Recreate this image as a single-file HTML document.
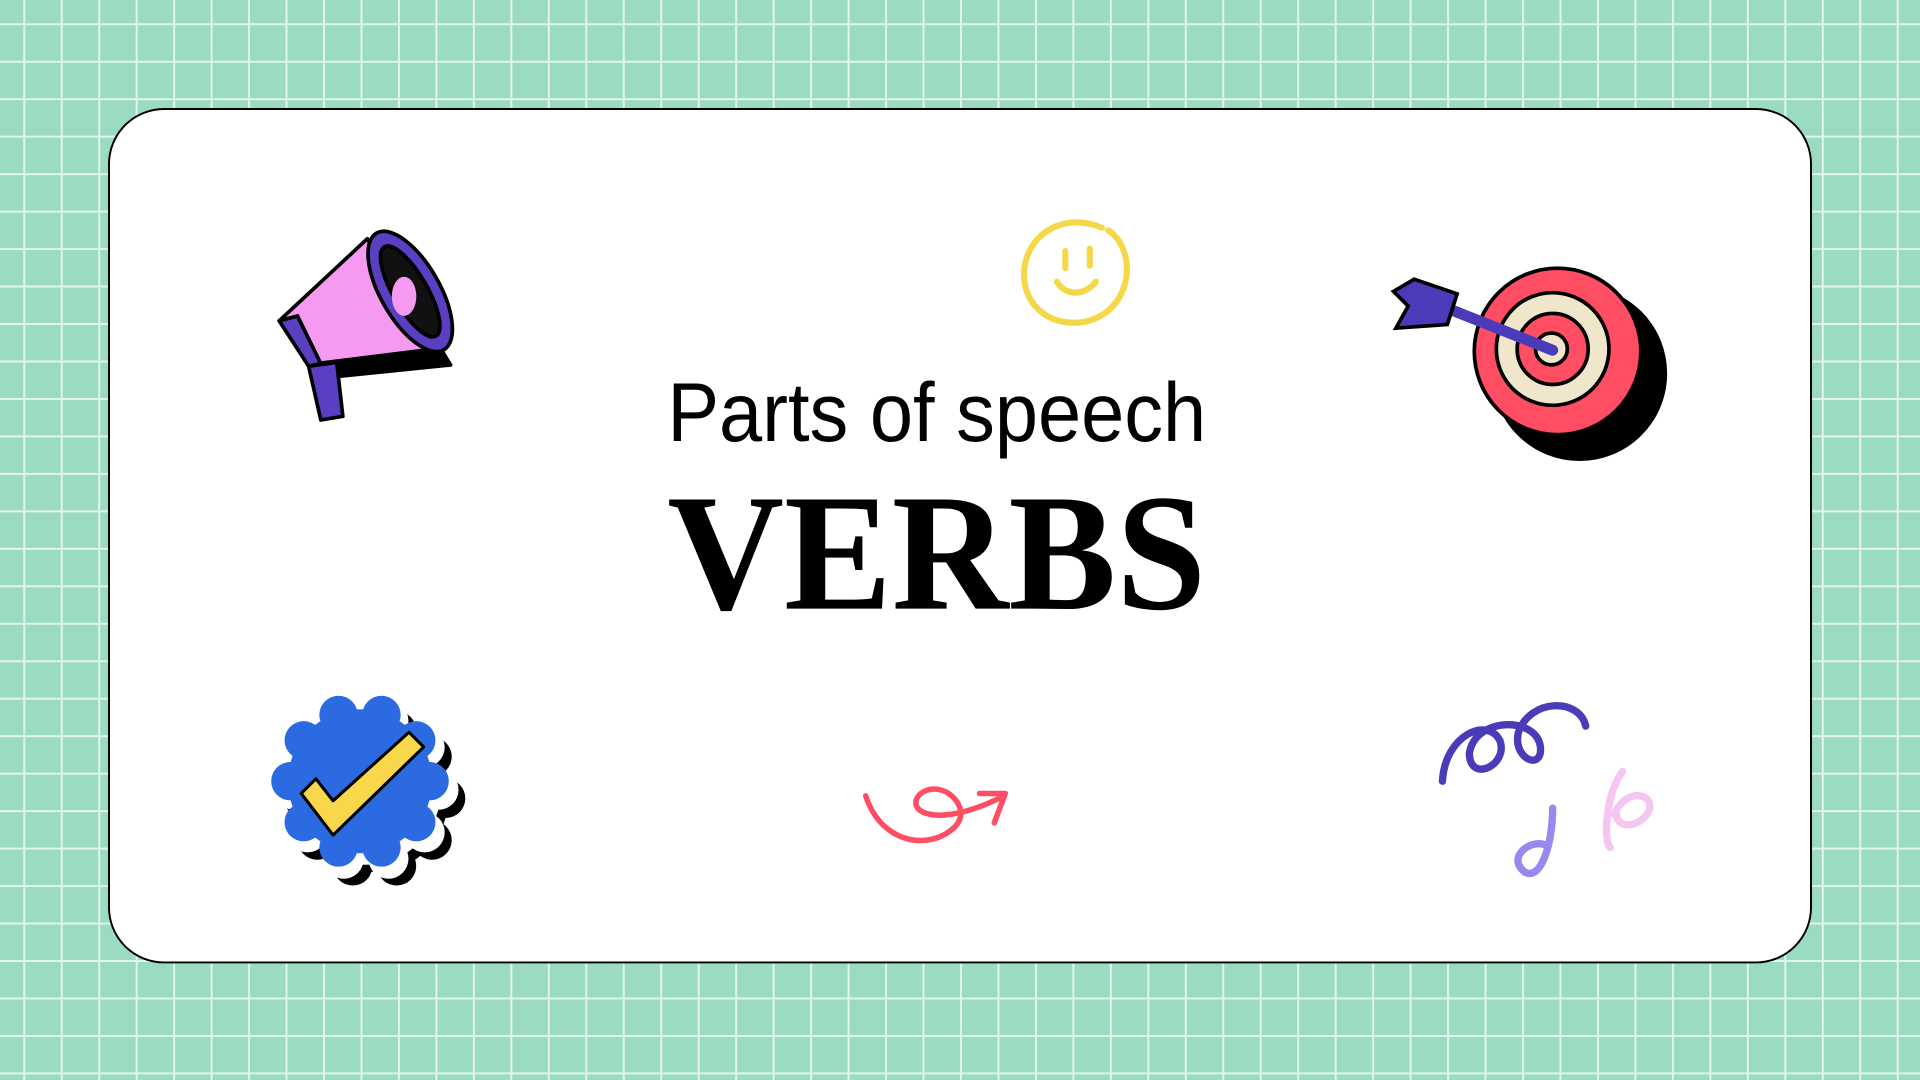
<!DOCTYPE html>
<html><head><meta charset="utf-8"><style>html,body{margin:0;padding:0;width:1920px;height:1080px;overflow:hidden;background:#9bdbc2}svg{display:block}</style></head><body>
<svg width="1920" height="1080" viewBox="0 0 1568 882" xmlns="http://www.w3.org/2000/svg">
<defs><pattern id="g" x="19" y="19" width="30.6" height="30.6" patternUnits="userSpaceOnUse"><rect width="30.6" height="30.6" fill="#9bdbc2"/><path d="M0 0H30.6M0 0V30.6" stroke="#e2f4ec" stroke-width="3.2"/></pattern>
<g id="b"><circle cx="0" cy="0" r="60"/>
<circle cx="58" cy="0" r="16"/><circle cx="46.9" cy="34.1" r="16"/><circle cx="17.9" cy="55.2" r="16"/><circle cx="-17.9" cy="55.2" r="16"/><circle cx="-46.9" cy="34.1" r="16"/><circle cx="-58" cy="0" r="16"/><circle cx="-46.9" cy="-34.1" r="16"/><circle cx="-17.9" cy="-55.2" r="16"/><circle cx="17.9" cy="-55.2" r="16"/><circle cx="46.9" cy="-34.1" r="16"/></g>
</defs>
<rect width="1568" height="882" fill="url(#g)"/>
<rect x="89" y="89" width="1390" height="697" rx="45" fill="#fff" stroke="#000" stroke-width="1.6"/>
<text x="545" y="360" font-family="Liberation Sans, sans-serif" font-size="68" textLength="440" lengthAdjust="spacingAndGlyphs" fill="#000">Parts of speech</text>
<text x="545" y="497" font-family="Liberation Serif, serif" font-weight="bold" font-size="136" textLength="440" lengthAdjust="spacingAndGlyphs" fill="#000">VERBS</text>
<!-- smiley -->
<g fill="none" stroke="#f5d84a" stroke-width="5" stroke-linecap="round"><path d="M905 188 C930 205 925 255 885 263 C850 268 830 240 838 212 C846 185 875 175 900 186"/><path d="M870 205v14M890 203v14M863 230c8 12 22 12 32 0"/></g>
<!-- megaphone -->
<g stroke="#000" stroke-width="3" stroke-linejoin="round">
<path d="M232 268 L305 200 L360 290 L262 300 Z" fill="#000" transform="translate(8,8)"/>
<path d="M228 262 L300 195 L355 285 L258 297 Z" fill="#f59af0"/>
<path d="M228 262 L243 258 L262 297 L252 299 Z" fill="#5a3fc2"/>
<path d="M252 299 L275 296 L280 340 L262 343 Z" fill="#5a3fc2"/>
<ellipse cx="335" cy="238" rx="24" ry="55" transform="rotate(-30 335 238)" fill="#5a3fc2"/>
<ellipse cx="335" cy="238" rx="14" ry="42" transform="rotate(-30 335 238)" fill="#111"/>
<ellipse cx="330" cy="242" rx="10" ry="16" fill="#f59af0" stroke="none"/>
</g>
<!-- target -->
<g stroke="#000" stroke-width="3">
<circle cx="1290" cy="305" r="70" fill="#000"/>
<circle cx="1272" cy="287" r="68" fill="#ff4d63"/>
<circle cx="1268" cy="285" r="46" fill="#efe6cc"/>
<circle cx="1268" cy="285" r="29" fill="#ff4d63"/>
<circle cx="1267" cy="285" r="13" fill="#efe6cc"/>
<path d="M1165 245 L1268 286" stroke="#4a3bb8" stroke-width="9" stroke-linecap="round"/>
<path d="M1155 228 L1190 240 L1182 265 L1140 268 L1150 250 L1138 238 Z" fill="#4a3bb8"/>
</g>
<!-- badge -->
<use href="#b" transform="translate(306,652)" fill="#000"/>
<use href="#b" transform="translate(299,645) scale(1.02)" fill="#fff"/>
<use href="#b" transform="translate(294,638) scale(0.98)" fill="#2b6ae0"/>
<path d="M246 648 L258 636 L272 654 L334 598 L346 610 L272 682 Z" fill="#f8d84a" stroke="#000" stroke-width="2.5" stroke-linejoin="round"/>
<!-- red squiggle -->
<g fill="none" stroke="#ff4d63" stroke-width="4.5" stroke-linecap="round" stroke-linejoin="round"><path d="M707 650 C720 690 760 695 780 675 C795 660 770 635 752 648 C738 660 760 680 820 650"/><path d="M800 648 L821 648 L812 672"/></g>
<!-- purple curls -->
<g fill="none" stroke-width="6" stroke-linecap="round">
<path d="M1178 638 C1180 600 1215 585 1225 605 C1232 625 1200 640 1200 615 C1205 585 1255 585 1258 610 C1260 630 1235 620 1240 598 C1250 570 1290 570 1295 593" stroke="#4a3bb8"/>
<path d="M1268 660 C1268 690 1258 720 1245 712 C1230 700 1250 685 1262 690" stroke="#9a88f0"/>
<path d="M1325 630 C1310 650 1310 690 1315 692 M1318 665 C1330 640 1355 650 1345 665 C1335 678 1320 675 1320 665" stroke="#f6c6f2"/>
</g>
</svg>
</body></html>
